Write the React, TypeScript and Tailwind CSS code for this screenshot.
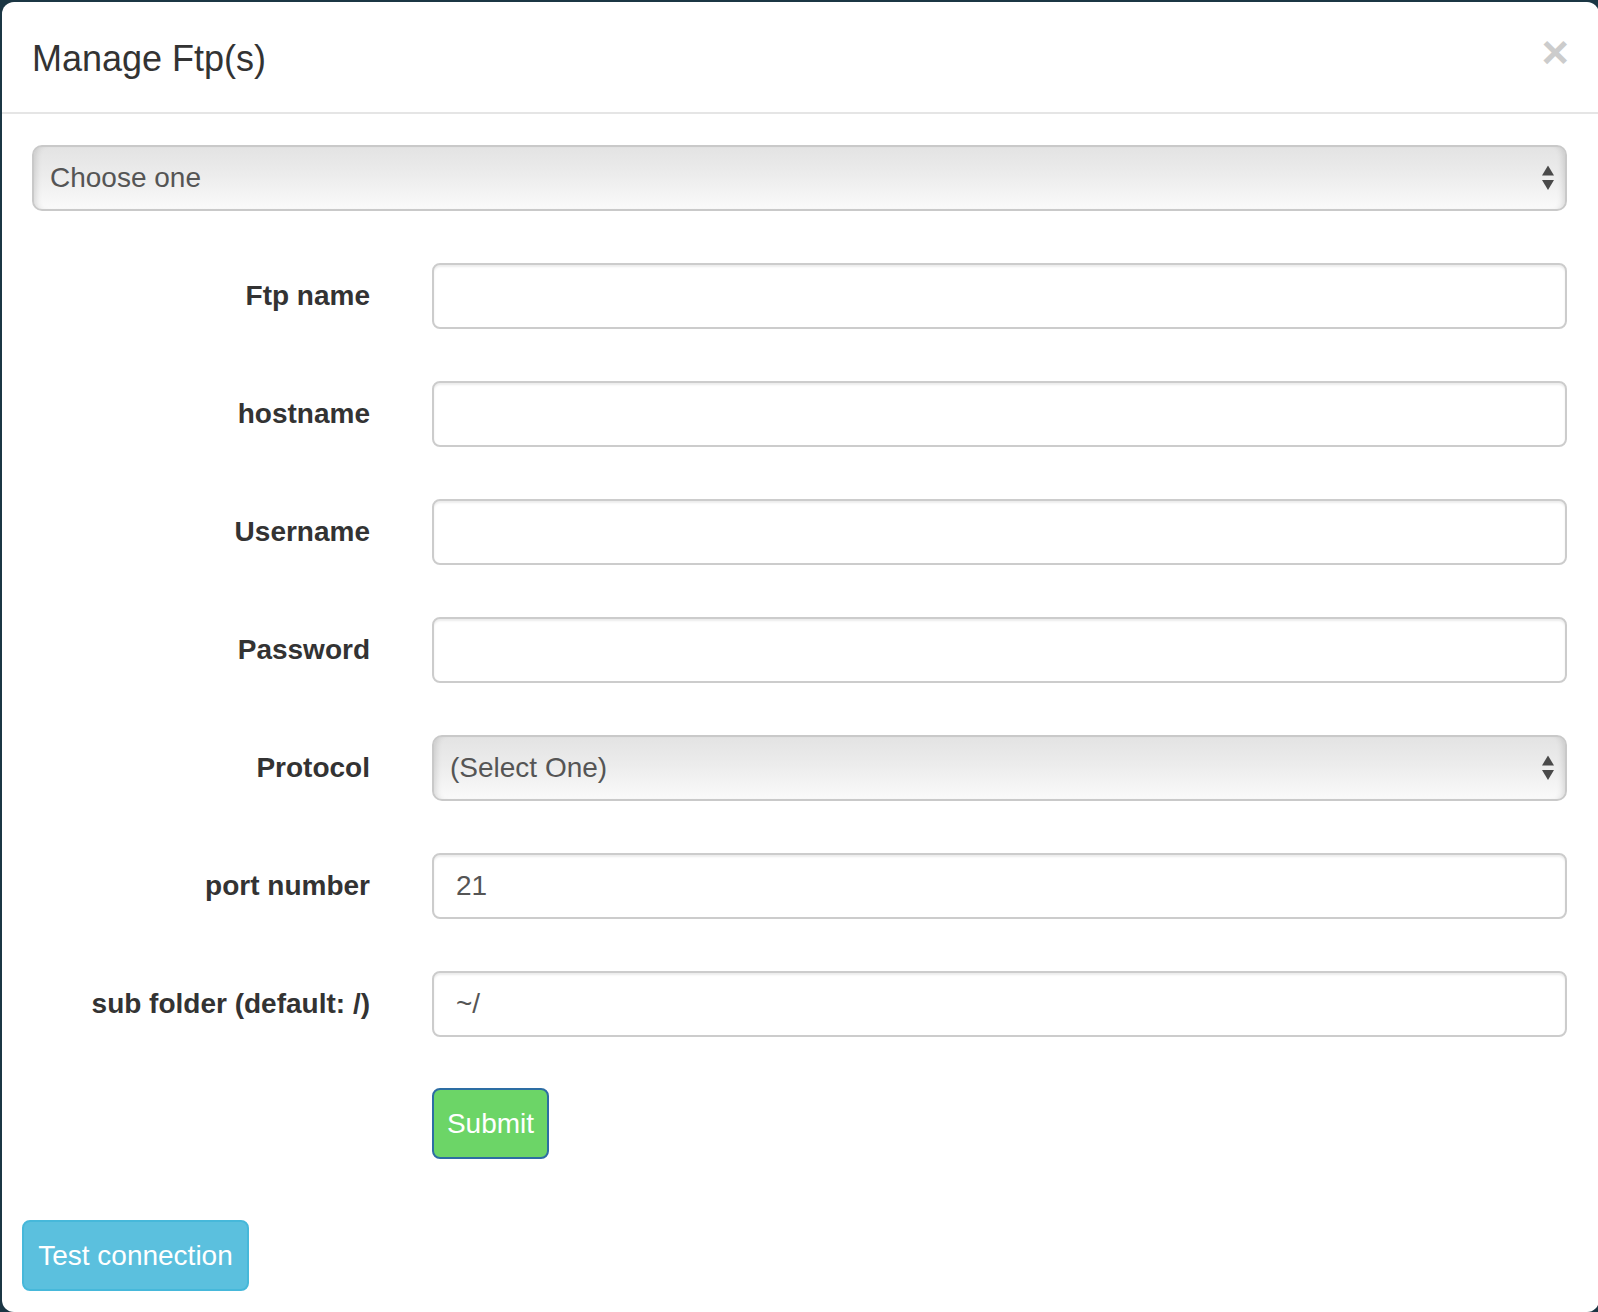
import React from "react";

function Arrows() {
  return (
    <svg width="12" height="25" viewBox="0 0 12 25" className="block">
      <polygon points="6,0 12,10 0,10" fill="#4a4a4a" />
      <polygon points="0,14.5 12,14.5 6,24.5" fill="#4a4a4a" />
    </svg>
  );
}

function FakeSelect({ text, padLeft }: { text: string; padLeft: string }) {
  return (
    <div
      className={`relative h-[66px] w-full rounded-[10px] border-2 border-[#c9c9c9] bg-[linear-gradient(to_bottom,#e3e3e3_0%,#ececec_45%,#fafafa_100%)] shadow-[inset_7px_0_6px_-5px_rgba(0,0,0,0.13),inset_-7px_0_6px_-5px_rgba(0,0,0,0.13)] flex items-center ${padLeft}`}
    >
      <span className="text-[28px] text-[#555555] leading-none">{text}</span>
      <div className="absolute right-[11px] top-1/2 -translate-y-1/2">
        <Arrows />
      </div>
    </div>
  );
}

function Row({ label, children }: { label: string; children: React.ReactNode }) {
  return (
    <div className="flex items-center h-[66px]">
      <div className="w-[338px] shrink-0 text-right text-[28px] font-bold text-[#333333] leading-none">
        {label}
      </div>
      <div className="ml-[62px] flex-1 h-full">{children}</div>
    </div>
  );
}

function TextInput({ value }: { value?: string }) {
  return (
    <input
      type="text"
      defaultValue={value ?? ""}
      className="block h-[66px] w-full rounded-[8px] border-2 border-[#cccccc] bg-white px-[22px] text-[28px] text-[#555555] shadow-[inset_0_2px_2px_rgba(0,0,0,0.075)] outline-none"
    />
  );
}

export default function App() {
  return (
    <div className="w-[1598px] h-[1312px] overflow-hidden bg-[#1b3644] pt-[2px] pl-[2px] font-['Liberation_Sans',Arial,Helvetica,sans-serif]">
      <div className="w-[1597px] h-[1310px] bg-white rounded-[12px] flex flex-col">
        {/* Header */}
        <div className="h-[112px] shrink-0 border-b-2 border-[#e5e5e5] pl-[30px] pr-[32px] pt-[31px] flex items-start justify-between">
          <h4 className="text-[36px] leading-[51px] text-[#333333] font-normal m-0">Manage Ftp(s)</h4>
          <button className="text-[47px] font-bold leading-none text-[#cccccc] mr-[-2px] mt-[-5px]">×</button>
        </div>

        {/* Body */}
        <div className="pl-[30px] pr-[32px] pt-[31px] flex flex-col">
          <FakeSelect text="Choose one" padLeft="pl-[16px]" />

          <div className="mt-[52px] flex flex-col gap-[52px]">
            <Row label="Ftp name">
              <TextInput />
            </Row>
            <Row label="hostname">
              <TextInput />
            </Row>
            <Row label="Username">
              <TextInput />
            </Row>
            <Row label="Password">
              <TextInput />
            </Row>
            <Row label="Protocol">
              <FakeSelect text="(Select One)" padLeft="pl-[16px]" />
            </Row>
            <Row label="port number">
              <TextInput value="21" />
            </Row>
            <Row label="sub folder (default: /)">
              <TextInput value="~/" />
            </Row>
          </div>

          <div className="mt-[51px] ml-[400px]">
            <button className="w-[117px] h-[71px] rounded-[8px] border-2 border-[#2d6da3] bg-[#6cd567] text-white text-[28px] leading-none flex items-center justify-center">
              Submit
            </button>
          </div>
        </div>

        {/* Footer */}
        <div className="pl-[20px] mt-[61px]">
          <button className="w-[227px] h-[71px] rounded-[8px] border-2 border-[#46b8da] bg-[#5bc0de] text-white text-[28px] leading-none flex items-center justify-center">
            Test connection
          </button>
        </div>
      </div>
    </div>
  );
}
